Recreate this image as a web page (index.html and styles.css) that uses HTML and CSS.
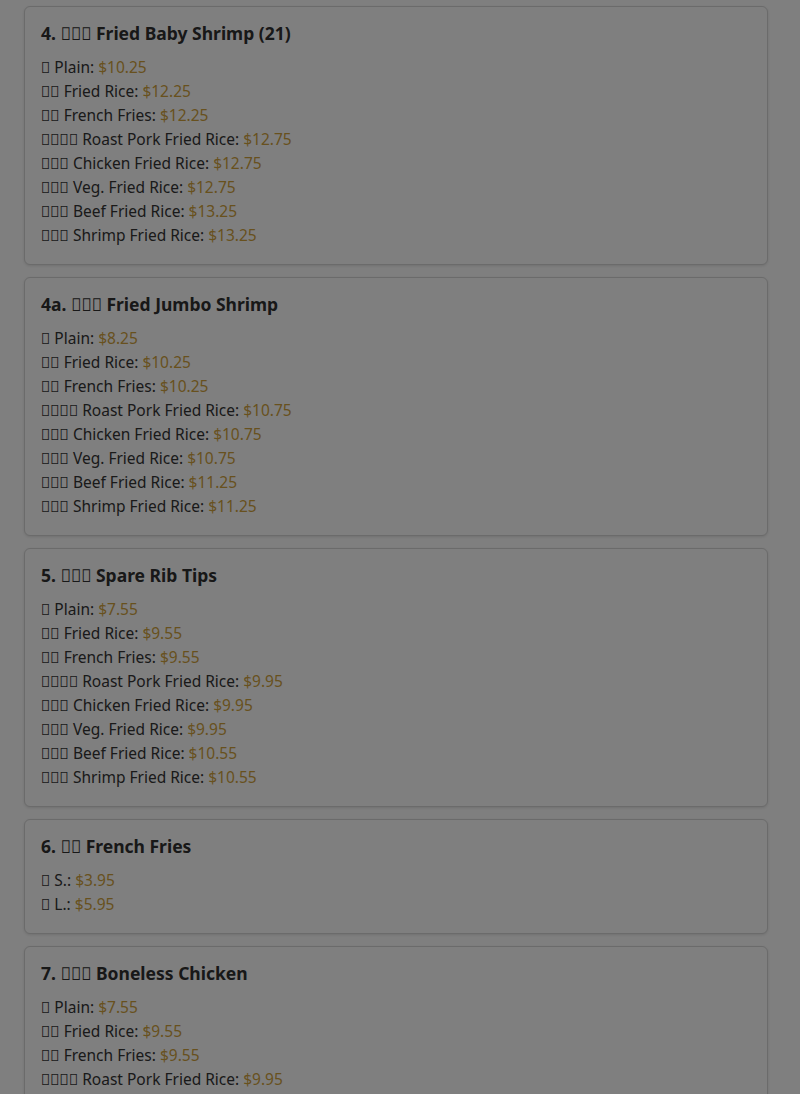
FILE: index.html
```html
<!DOCTYPE html>
<html lang="en">
<head>
<meta charset="utf-8">
<title>Menu</title>
<link rel="stylesheet" href="styles.css">
</head>
<body>
<main class="menu">
  <section class="card">
    <h3 class="title">4. &#xE000;&#xE001;&#xE002; Fried Baby Shrimp (21)</h3>
    <ul class="items">
      <li>&#xE010; Plain: <span class="price">$10.25</span></li>
      <li>&#xE011;&#xE012; Fried Rice: <span class="price">$12.25</span></li>
      <li>&#xE013;&#xE014; French Fries: <span class="price">$12.25</span></li>
      <li>&#xE015;&#xE016;&#xE011;&#xE012; Roast Pork Fried Rice: <span class="price">$12.75</span></li>
      <li>&#xE017;&#xE011;&#xE012; Chicken Fried Rice: <span class="price">$12.75</span></li>
      <li>&#xE018;&#xE011;&#xE012; Veg. Fried Rice: <span class="price">$12.75</span></li>
      <li>&#xE019;&#xE011;&#xE012; Beef Fried Rice: <span class="price">$13.25</span></li>
      <li>&#xE01A;&#xE011;&#xE012; Shrimp Fried Rice: <span class="price">$13.25</span></li>
    </ul>
  </section>
  <section class="card">
    <h3 class="title">4a. &#xE000;&#xE003;&#xE002; Fried Jumbo Shrimp</h3>
    <ul class="items">
      <li>&#xE010; Plain: <span class="price">$8.25</span></li>
      <li>&#xE011;&#xE012; Fried Rice: <span class="price">$10.25</span></li>
      <li>&#xE013;&#xE014; French Fries: <span class="price">$10.25</span></li>
      <li>&#xE015;&#xE016;&#xE011;&#xE012; Roast Pork Fried Rice: <span class="price">$10.75</span></li>
      <li>&#xE017;&#xE011;&#xE012; Chicken Fried Rice: <span class="price">$10.75</span></li>
      <li>&#xE018;&#xE011;&#xE012; Veg. Fried Rice: <span class="price">$10.75</span></li>
      <li>&#xE019;&#xE011;&#xE012; Beef Fried Rice: <span class="price">$11.25</span></li>
      <li>&#xE01A;&#xE011;&#xE012; Shrimp Fried Rice: <span class="price">$11.25</span></li>
    </ul>
  </section>
  <section class="card">
    <h3 class="title">5. &#xE004;&#xE005;&#xE006; Spare Rib Tips</h3>
    <ul class="items">
      <li>&#xE010; Plain: <span class="price">$7.55</span></li>
      <li>&#xE011;&#xE012; Fried Rice: <span class="price">$9.55</span></li>
      <li>&#xE013;&#xE014; French Fries: <span class="price">$9.55</span></li>
      <li>&#xE015;&#xE016;&#xE011;&#xE012; Roast Pork Fried Rice: <span class="price">$9.95</span></li>
      <li>&#xE017;&#xE011;&#xE012; Chicken Fried Rice: <span class="price">$9.95</span></li>
      <li>&#xE018;&#xE011;&#xE012; Veg. Fried Rice: <span class="price">$9.95</span></li>
      <li>&#xE019;&#xE011;&#xE012; Beef Fried Rice: <span class="price">$10.55</span></li>
      <li>&#xE01A;&#xE011;&#xE012; Shrimp Fried Rice: <span class="price">$10.55</span></li>
    </ul>
  </section>
  <section class="card">
    <h3 class="title">6. &#xE013;&#xE014; French Fries</h3>
    <ul class="items">
      <li>&#xE01B; S.: <span class="price">$3.95</span></li>
      <li>&#xE01C; L.: <span class="price">$5.95</span></li>
    </ul>
  </section>
  <section class="card card-last">
    <h3 class="title">7. &#xE007;&#xE008;&#xE009; Boneless Chicken</h3>
    <ul class="items">
      <li>&#xE010; Plain: <span class="price">$7.55</span></li>
      <li>&#xE011;&#xE012; Fried Rice: <span class="price">$9.55</span></li>
      <li>&#xE013;&#xE014; French Fries: <span class="price">$9.55</span></li>
      <li>&#xE015;&#xE016;&#xE011;&#xE012; Roast Pork Fried Rice: <span class="price">$9.95</span></li>
    </ul>
  </section>
</main>
<div class="overlay"></div>
</body>
</html>
```
FILE: styles.css
```css
html, body {
  margin: 0;
  padding: 0;
  background: #ffffff;
  overflow: hidden;
}
body {
  font-family: "Noto Sans", "DejaVu Sans", sans-serif;
  color: #343434;
}
.menu {
  display: flex;
  flex-direction: column;
  gap: 12px;
  padding: 6px 32px 0 24px;
}
.card {
  border: 1px solid #d6d6d6;
  border-radius: 6px;
  background: #ffffff;
  box-shadow: 0 1px 3px rgba(0, 0, 0, 0.12);
  padding: 16px 16px 17px;
}
.card-last {
  padding-bottom: 40px;
}
.title {
  margin: 0 0 12px;
  font-size: 17.5px;
  line-height: 20px;
  font-weight: 700;
  color: #303030;
}
.items {
  list-style: none;
  margin: 0;
  padding: 0;
  font-size: 15.5px;
  line-height: 24px;
}
.price {
  color: #d0a23c;
}
.overlay {
  position: fixed;
  inset: 0;
  background: rgba(0, 0, 0, 0.5);
}
```
